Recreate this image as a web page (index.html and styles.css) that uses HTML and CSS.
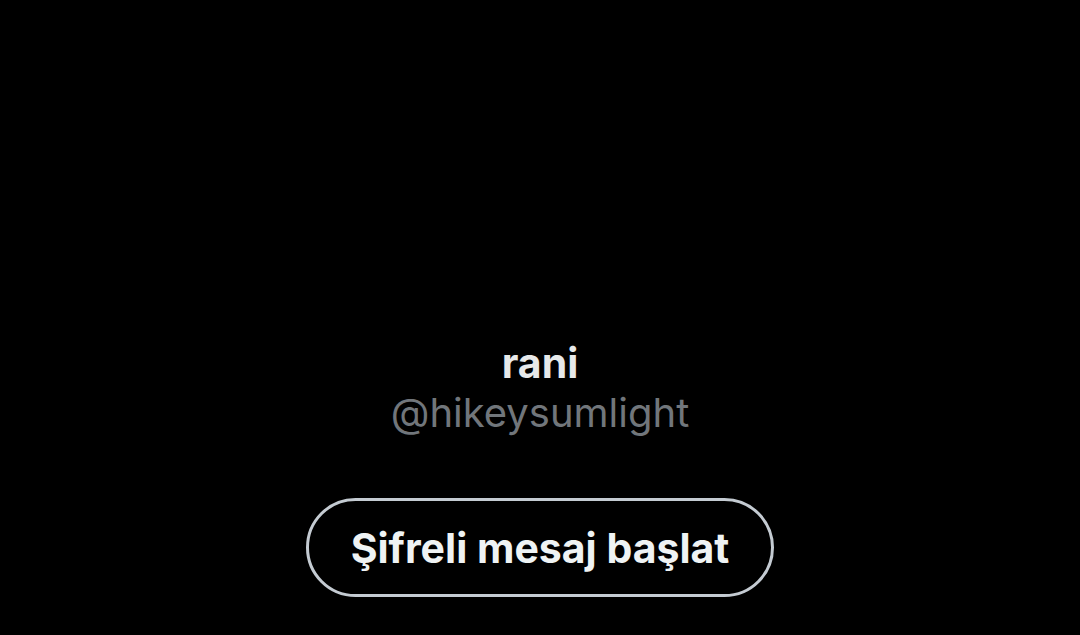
FILE: index.html
```html
<!DOCTYPE html>
<html lang="tr">
<head>
<meta charset="UTF-8" />
<title>rani</title>
<link rel="stylesheet" href="styles.css">
</head>
<body>

<div class="profile">
  <div class="name">rani</div>
  <div class="handle">@hikeysumlight</div>
  <button class="start-chat">Şifreli mesaj başlat</button>
</div>

</body>
</html>
```

FILE: styles.css
```css
body {
  margin: 0;
  background-color: #000;
  font-family: Inter, "Noto Sans", sans-serif;
  height: 635px;
  overflow: hidden;
}
.profile {
  display: flex;
  flex-direction: column;
  align-items: center;
  padding-top: 338px;
}
.name {
  color: #e7e9ea;
  font-size: 41px;
  font-weight: bold;
  line-height: 50px;
}
.handle {
  color: #71767b;
  font-size: 40px;
  line-height: 50px;
}
.start-chat {
  margin-top: 60px;
  width: 468px;
  height: 99px;
  border: 3px solid #c4cbd2;
  border-radius: 50px;
  background: #000;
  color: #eff3f4;
  font-family: inherit;
  font-size: 41px;
  font-weight: bold;
  cursor: pointer;
}
```
